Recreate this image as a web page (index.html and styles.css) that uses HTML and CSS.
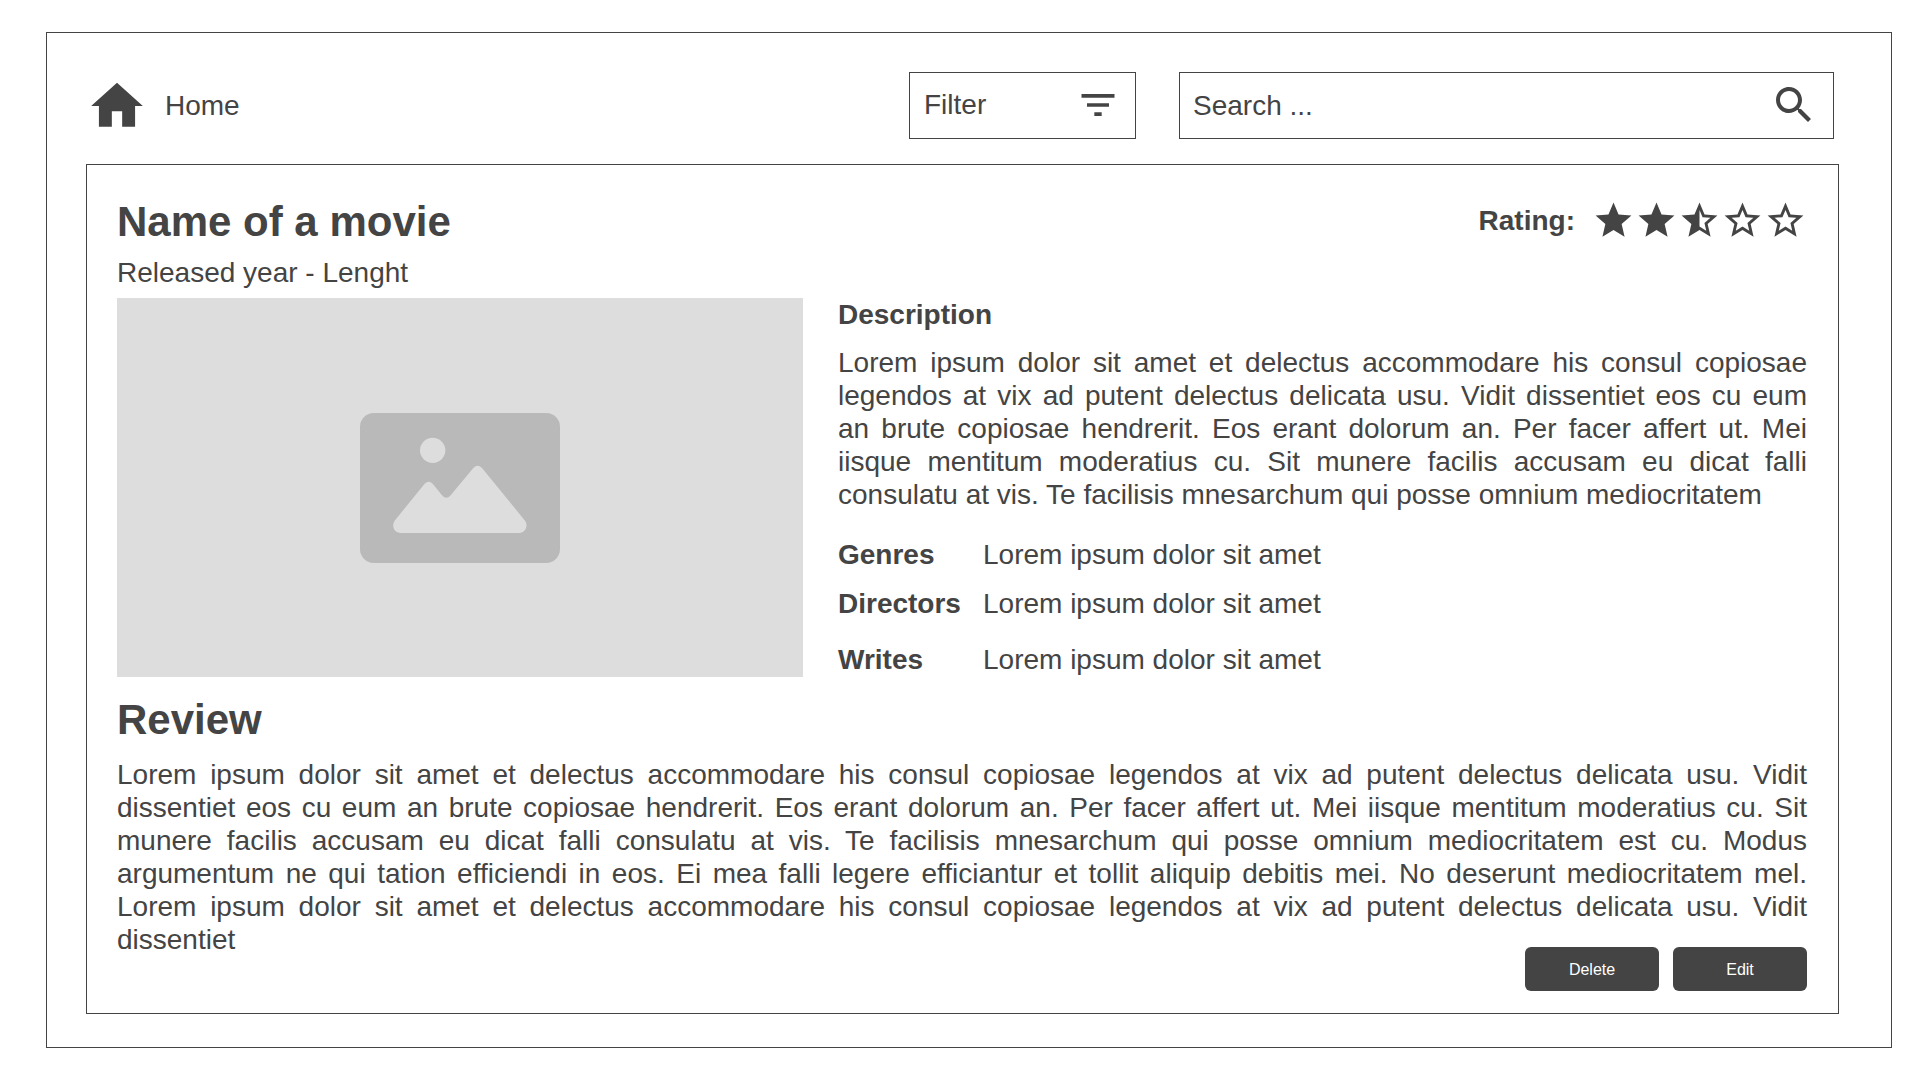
FILE: index.html
```html
<!DOCTYPE html>
<html lang="en">
<head>
  <meta charset="utf-8">
  <meta name="viewport" content="width=device-width, initial-scale=1">
  <title>Name of a movie</title>
  <link rel="stylesheet" href="styles.css">
</head>
<body>
  <div class="page">
    <header class="topbar">
      <a class="home" href="#">
        <svg class="home-icon" viewBox="0 0 24 24" aria-hidden="true"><path d="M10 20v-6h4v6h5v-8h3L12 3 2 12h3v8z"/></svg>
        <span>Home</span>
      </a>
      <button class="filter" type="button">
        <span>Filter</span>
        <svg class="filter-icon" viewBox="0 0 24 24" aria-hidden="true"><path d="M10 18h4v-2h-4v2zM3 6v2h18V6H3zm3 7h12v-2H6v2z"/></svg>
      </button>
      <form class="search" role="search">
        <input class="search-input" type="text" placeholder="Search ..." aria-label="Search">
        <button class="search-button" type="submit" aria-label="Search">
          <svg class="search-icon" viewBox="0 0 24 24" aria-hidden="true"><path d="M15.5 14h-.79l-.28-.27C15.41 12.59 16 11.11 16 9.500 16 5.910 13.090 3 9.500 3S3 5.910 3 9.500 5.910 16 9.500 16c1.610 0 3.090-.590 4.230-1.570l.270.280v.790l5 4.990L20.490 19l-4.990-5zm-6 0C7.010 14 5 11.990 5 9.500S7.010 5 9.500 5 14 7.010 14 9.500 11.990 14 9.500 14z"/></svg>
        </button>
      </form>
    </header>

    <main class="panel">
      <div class="title-row">
        <h1 class="heading">Name of a movie</h1>
        <div class="rating">
          <span class="label">Rating:</span>
          <div class="stars" role="img" aria-label="2.5 out of 5">
            <svg class="star" viewBox="0 0 24 24"><path d="M12 17.270L18.180 21l-1.640-7.030L22 9.240l-7.190-.610L12 2 9.190 8.630 2 9.240l5.460 4.730L5.820 21z"/></svg>
            <svg class="star" viewBox="0 0 24 24"><path d="M12 17.270L18.180 21l-1.640-7.030L22 9.240l-7.190-.610L12 2 9.190 8.630 2 9.240l5.460 4.730L5.820 21z"/></svg>
            <svg class="star" viewBox="0 0 24 24"><path d="M22 9.240l-7.190-.620L12 2 9.190 8.630 2 9.240l5.460 4.730L5.820 21 12 17.270 18.180 21l-1.630-7.030L22 9.240zM12 15.400V6.100l1.710 4.040 4.380.380-3.320 2.880 1 4.280L12 15.400z"/></svg>
            <svg class="star" viewBox="0 0 24 24"><path d="M22 9.240l-7.190-.620L12 2 9.190 8.630 2 9.240l5.460 4.730L5.820 21 12 17.270 18.180 21l-1.630-7.030L22 9.240zM12 15.400l-3.760 2.270 1-4.280-3.320-2.880 4.380-.380L12 6.100l1.710 4.040 4.380.380-3.320 2.880 1 4.280L12 15.400z"/></svg>
            <svg class="star" viewBox="0 0 24 24"><path d="M22 9.240l-7.190-.620L12 2 9.190 8.630 2 9.240l5.460 4.730L5.820 21 12 17.270 18.180 21l-1.630-7.030L22 9.240zM12 15.400l-3.760 2.270 1-4.280-3.320-2.880 4.380-.380L12 6.100l1.710 4.040 4.380.380-3.320 2.880 1 4.280L12 15.400z"/></svg>
          </div>
        </div>
      </div>
      <p class="subtitle">Released year - Lenght</p>

      <div class="details">
        <div class="poster">
          <svg class="poster-icon" viewBox="0 0 600 450" aria-hidden="true">
            <rect class="poster-frame" width="600" height="450" rx="42"/>
            <circle class="poster-cutout" cx="218" cy="112" r="38"/>
            <path class="poster-cutout" d="M104 323L194 212Q206 201 218 212L246 247Q259 262 272 247L340 165Q353 152 366 165L495 323C506 338 496 360 478 360H122C104 360 93 341 104 323Z"/>
          </svg>
        </div>
        <div class="info">
          <h2 class="label">Description</h2>
          <p class="text">Lorem ipsum dolor sit amet et delectus accommodare his consul copiosae legendos at vix ad putent delectus delicata usu. Vidit dissentiet eos cu eum an&nbsp;brute copiosae hendrerit. Eos erant dolorum an. Per facer affert ut. Mei iisque mentitum moderatius cu. Sit munere facilis accusam eu dicat falli consulatu at vis. Te facilisis mnesarchum qui posse omnium mediocritatem</p>
          <dl class="facts">
            <dt class="label">Genres</dt><dd>Lorem ipsum dolor sit amet</dd>
            <dt class="label">Directors</dt><dd>Lorem ipsum dolor sit amet</dd>
            <dt class="label">Writes</dt><dd>Lorem ipsum dolor sit amet</dd>
          </dl>
        </div>
      </div>

      <section class="review">
        <h2 class="heading">Review</h2>
        <p class="text">Lorem ipsum dolor sit amet et delectus accommodare his consul copiosae legendos at vix ad putent delectus delicata usu. Vidit dissentiet eos cu eum an brute copiosae hendrerit. Eos erant dolorum an. Per facer affert ut. Mei iisque mentitum moderatius cu. Sit munere facilis accusam eu dicat falli consulatu at vis. Te facilisis mnesarchum qui posse omnium mediocritatem est cu. Modus argumentum ne qui tation efficiendi in eos. Ei mea falli legere efficiantur et tollit aliquip debitis mei. No deserunt mediocritatem mel. Lorem ipsum dolor sit amet et delectus accommodare his consul copiosae legendos at vix ad putent delectus delicata usu. Vidit dissentiet</p>
      </section>
      <div class="actions">
        <button class="action" type="button">Delete</button>
        <button class="action" type="button">Edit</button>
      </div>
    </main>
  </div>
</body>
</html>
```

FILE: styles.css
```css
* {
  box-sizing: border-box;
}

body {
  margin: 0;
  padding: 32px 15px 32px 46px;
  background: #fff;
  color: #444;
  font: 28px/33px "Liberation Sans", Arial, sans-serif;
}

h1, h2, p, dl, dd {
  margin: 0;
}

svg {
  display: block;
  flex: none;
  fill: #444;
}

button, input {
  margin: 0;
  color: inherit;
  font: inherit;
}

.page {
  padding: 39px 52px 33px 39px;
  border: 1px solid #444;
}

/* Top bar */
.topbar {
  display: flex;
  align-items: center;
  margin: 0 5px 25px 0;
}

.home {
  display: flex;
  align-items: center;
  gap: 17px;
  margin-right: auto;
  color: inherit;
  text-decoration: none;
}

.home-icon {
  width: 62px;
  height: 62px;
}

.filter,
.search {
  display: flex;
  align-items: center;
  justify-content: space-between;
  height: 67px;
  border: 1px solid #444;
  background: #fff;
}

.filter {
  width: 227px;
  margin-right: 43px;
  padding: 0 15px 2px 14px;
}

.filter-icon {
  width: 44px;
  height: 44px;
}

.search {
  flex: 0 1 655px;
  padding: 0 15px 0 13px;
}

.search-input {
  flex: 1;
  min-width: 0;
  padding: 0;
  border: 0;
  background: none;
  outline: 0;
}

.search-input::placeholder {
  color: #444;
  opacity: 1;
}

.search-button {
  padding: 0 0 2px;
  border: 0;
  background: none;
}

.search-icon {
  width: 48px;
  height: 48px;
}

/* Movie panel */
.panel {
  padding: 31px 31px 22px 30px;
  border: 1px solid #444;
}

.title-row {
  display: flex;
  align-items: flex-start;
  justify-content: space-between;
}

.heading {
  font-size: 42px;
  line-height: 52px;
}

.label {
  font-size: 28px;
  font-weight: bold;
  line-height: 33px;
}

.rating {
  display: flex;
  align-items: center;
  gap: 17px;
  height: 48px;
}

.stars {
  display: flex;
}

.star {
  width: 43px;
  height: 43px;
}

.subtitle {
  margin: 8px 0 9px;
}

.details {
  display: grid;
  grid-template-columns: minmax(0, 686fr) minmax(0, 969fr);
  gap: 35px;
  align-items: start;
}

.poster {
  display: flex;
  align-items: center;
  justify-content: center;
  aspect-ratio: 686 / 379;
  background: #ddd;
}

.poster-icon {
  width: 200px;
  height: 150px;
}

.poster-frame {
  fill: #b9b9b9;
}

.poster-cutout {
  fill: #ddd;
}

.text {
  text-align: justify;
}

.info .text {
  margin: 15px 0 27px;
}

.facts {
  display: grid;
  grid-template-columns: 145px 1fr;
  grid-template-rows: 49px 56px 33px;
}

.review {
  margin-top: 17px;
}

.review .text {
  margin-top: 12px;
}

/* The buttons share the height of the review's last line */
.actions {
  display: flex;
  justify-content: flex-end;
  gap: 14px;
  margin-top: -9px;
}

.action {
  width: 134px;
  height: 44px;
  padding: 0;
  border: 0;
  border-radius: 6px;
  background: #444;
  color: #fff;
  font-size: 16px;
}
```
